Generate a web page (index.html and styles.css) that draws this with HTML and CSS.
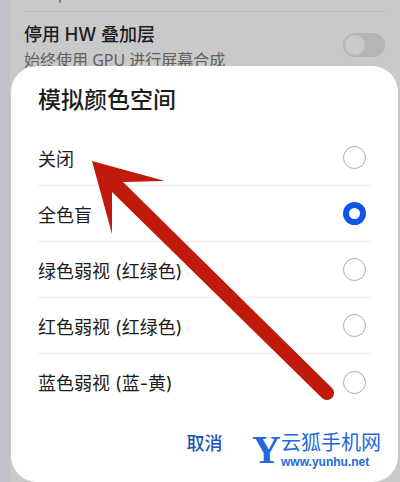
FILE: index.html
```
<!DOCTYPE html>
<html lang="zh-CN">

<head>
    <meta charset="UTF-8">
    <meta name="viewport" content="width=device-width, initial-scale=1.0">
    <title>模拟颜色空间</title>
    <link rel="stylesheet" href="styles.css">
</head>

<body>
    <div class="page">
        <p class="previous">,</p>
        <label class="setting">
            <span class="setting-text">
                <span class="setting-name">停用 HW 叠加层</span>
                <span class="setting-desc">始终使用 GPU 进行屏幕合成</span>
            </span>
            <input type="checkbox" class="switch">
        </label>
    </div>
    <form class="dialog">
        <h1 class="title">模拟颜色空间</h1>
        <div class="options">
            <label class="option">关闭<input type="radio" name="space"></label>
            <label class="option">全色盲<input type="radio" name="space" checked></label>
            <label class="option">绿色弱视 (红绿色)<input type="radio" name="space"></label>
            <label class="option">红色弱视 (红绿色)<input type="radio" name="space"></label>
            <label class="option">蓝色弱视 (蓝-黄)<input type="radio" name="space"></label>
        </div>
        <div class="actions">
            <button type="button" class="cancel">取消</button>
        </div>
        <svg class="arrow" viewBox="0 0 242 240" aria-hidden="true">
            <path d="M0 0L73 20L31 21L240 227A7 7 0 0 1 230 237L20 31V73Z" />
        </svg>
        <div class="mark">
            <span class="mark-logo">Y</span>
            <span class="mark-text">
                <span class="mark-name">云狐手机网</span>
                <span class="mark-url">www.yunhu.net</span>
            </span>
        </div>
    </form>
</body>

</html>
```

FILE: styles.css
```
* {
    box-sizing: border-box;
    margin: 0;
    padding: 0;
}

body {
    background: #c9c9c9;
    border-left: 10px solid #c1c0c6;
    color: #1c1c1c;
    font-family: Inter, "Noto Sans CJK SC", sans-serif;
}

.page {
    display: flow-root;
    height: 66px;
    padding: 0 15px 0 14px;
}

/* tail of the row above, scrolled off the top */
.previous {
    height: 17px;
    margin-top: -6px;
    padding-left: 34px;
    color: #606060;
    font-size: 16px;
    line-height: 1px;
}

.setting {
    display: flex;
    justify-content: space-between;
    border-top: 1px solid #bebebe;
    padding-top: 10px;
}

.setting-text {
    display: flex;
    flex-direction: column;
}

.setting-name {
    font-size: 18px;
    font-weight: 500;
    line-height: 26px;
}

.setting-desc {
    color: #606060;
    font-family: "Noto Sans", "Noto Sans CJK SC", sans-serif;
    font-size: 16px;
    line-height: 24px;
}

.switch {
    appearance: none;
    width: 42px;
    height: 24px;
    margin-top: 11px;
    padding: 2px;
    border-radius: 12px;
    background: #b5b5b5;
}

.switch::before {
    content: "";
    display: block;
    width: 20px;
    height: 20px;
    border-radius: 50%;
    background: #c9c9c9;
}

.dialog {
    position: relative;
    margin: 0 2px 0 1px;
    padding: 16px 27px 20px;
    border-radius: 26px;
    background: #fff;
}

.title {
    font-size: 23px;
    font-weight: 500;
    line-height: 36px;
}

.options {
    padding-top: 12px;
}

.option {
    display: flex;
    align-items: center;
    justify-content: space-between;
    height: 56px;
    padding-right: 5px;
    border-bottom: 1px solid #eee;
    font-size: 18px;
}

.option:last-child {
    border-bottom: 0;
}

.option input {
    appearance: none;
    width: 23px;
    height: 23px;
    border: 1px solid #aaa;
    border-radius: 50%;
}

.option input:checked {
    border: 6px solid #0f56e8;
}

.actions {
    display: flex;
    justify-content: center;
    padding-top: 16px;
}

.cancel {
    border: 0;
    background: none;
    color: #1f55b5;
    font: 500 18px/36px Inter, "Noto Sans CJK SC", sans-serif;
}

.arrow {
    position: absolute;
    top: 95px;
    left: 81px;
    width: 242px;
    height: 240px;
    fill: #bf1a0c;
    pointer-events: none;
}

.mark {
    position: absolute;
    right: 17px;
    bottom: 13px;
    display: flex;
    align-items: center;
    color: #2468dc;
}

.mark-logo {
    font: bold 40px/36px "Liberation Serif", serif;
}

.mark-text {
    display: flex;
    flex-direction: column;
}

.mark-name {
    font-size: 20px;
    line-height: 24px;
}

.mark-url {
    font: bold 12px/14px "Liberation Sans", sans-serif;
}
```
